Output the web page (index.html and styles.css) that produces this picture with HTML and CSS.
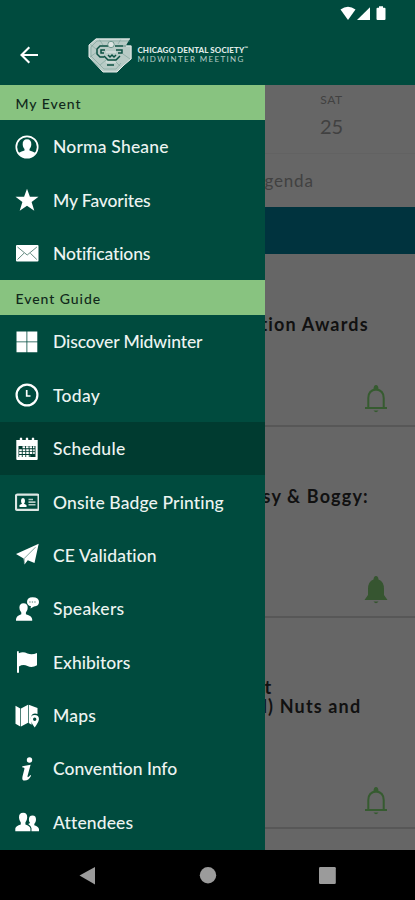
FILE: index.html
```html
<!DOCTYPE html>
<html lang="en">
<head>
<meta charset="utf-8">
<title>Midwinter Meeting</title>
<link rel="stylesheet" href="styles.css">
</head>
<body>
<div class="phone">
  <header class="top">
    <div class="status">
      <svg width="52" height="18" viewBox="0 0 52 18"><g fill="#fff"><path d="M2.500 4.500Q10-1 17.500 4.500L10 15Z"/><path d="M32 2.200V15H19Z"/><path d="M41 1.300h4v1.500h1.500q1 0 1 1V14q0 1-1 1h-7q-1 0-1-1V3.800q0-1 1-1H41Z"/></g></svg>
    </div>
    <div class="bar">
      <svg class="back" width="20" height="20" viewBox="0 0 20 20" fill="none" stroke="#fff" stroke-width="2.100"><path d="M19 10H3M10.300 2.200 2.500 10l7.800 7.800"/></svg>
      <svg class="logo" width="44" height="35" viewBox="0 0 44 35">
        <path fill="#b8cbc6" d="M8 .5H42L38 7.500H43.500V21L36 27 29 34H15L9 27 1 19V7Z"/>
        <g fill="none" stroke="#6f968d" stroke-width=".5"><path d="M42 3H9L3 9v9l13 13h12l5-6"/><path d="M2 6l6 5M2 19l7-5M12 27l6-5M26 22l6 6M35 16l7 5M11 1l4 6M33 1l-3 5"/></g>
        <g fill="none" stroke="#0b5042" stroke-width="1.500"><path d="M20 8H12L9 11v5l3 3h4M17 12h-4v3h3M27 8h11M28 12h6v3h-4M16 18l4 4h8l4-4M19 27h7M20 17l2 2 2-2 2 2 2-2"/></g>
        <circle cx="23" cy="6.500" r="3.200" fill="#dce5e2" stroke="#55867a" stroke-width=".8"/>
        <g fill="none" stroke="#e4ebe9" stroke-width="1"><path d="M42 1H8L1 7v12l14 15h14l7-7 7-6V8H35M18 14h10M18 24h10"/></g>
      </svg>
      <div class="brand"><div class="b1">CHICAGO DENTAL SOCIETY<span class="tm">™</span></div><div class="b2">MIDWINTER MEETING</div></div>
    </div>
  </header>
  <main class="main">
    <nav class="drawer">
      <h2>My Event</h2>
      <a class="item"><svg viewBox="0 0 24 24"><circle cx="12" cy="12" r="10.700" fill="none" stroke="#fff" stroke-width="1.700"/><path fill="#fff" d="M12 4.200c3 0 4.500 2 4.300 5.200-.1 2.400-1 3.600-1.800 4.500v1.600c1.800.5 4 1.300 6 2.600-2 3.300-5 4.600-8.500 4.600s-6.500-1.300-8.500-4.600c2-1.300 4.200-2.100 6-2.600v-1.600c-.8-.9-1.700-2.100-1.800-4.500C7.500 6.200 9 4.200 12 4.200Z"/></svg><span class="t">Norma Sheane</span></a>
      <a class="item"><svg viewBox="0 0 24 24"><path fill="#fff" d="m12 .8 2.900 7.900h8.600l-6.900 5.200 2.700 8.900L12 17.700l-7.300 5.100 2.700-8.900L.5 8.700h8.600Z"/></svg><span class="t snug">My Favorites</span></a>
      <a class="item"><svg viewBox="0 0 24 24"><rect x="1" y="4" width="22.500" height="16.500" rx="1" fill="#fff"/><path d="m2.500 6 9.700 8 9.700-8M2.500 18.500l6.500-6.300m6.300 0 6.500 6.300" fill="none" stroke="#517d72" stroke-width=".9"/></svg><span class="t snug">Notifications</span></a>
      <h2>Event Guide</h2>
      <a class="item"><svg viewBox="0 0 24 24"><path fill="#fff" d="M1.500 1.500h10v10h-10Zm10.800 0h10v10h-10ZM1.500 12.300h10v10h-10Zm10.800 0h10v10h-10Z"/></svg><span class="t snug">Discover Midwinter</span></a>
      <a class="item"><svg viewBox="0 0 24 24" fill="none" stroke="#fff"><circle cx="12" cy="12" r="10.400" stroke-width="2.200"/><path d="M11.700 7v6h3.800" stroke-width="1.700"/></svg><span class="t wide">Today</span></a>
      <a class="item on"><svg viewBox="0 0 24 24"><path fill="#fff" d="M1.300 3h3.500V1.300q1.200-1.500 2.400 0V3h3.600V1.300q1.200-1.500 2.400 0V3h3.600V1.300q1.200-1.500 2.400 0V3h3.500v19q0 1-1 1H2.300q-1 0-1-1Z"/><path fill="#003b30" d="M3.500 9h17v11h-17Z"/><path d="M7.500 10.300h12M4.200 13.200h15.500M4.200 16.100h15.500M4.200 18.900h11" stroke="#fff" stroke-width="2" stroke-dasharray="2.600 .9"/></svg><span class="t wide">Schedule</span></a>
      <a class="item"><svg viewBox="0 0 24 24"><rect x="1" y="4.600" width="22.600" height="15.200" rx="1.300" fill="none" stroke="#dce7e4" stroke-width="2.200"/><path fill="#fff" d="M4.500 17v-2l2.500-1.300q-1-1-1-3Q6 8 8 8t2 2.700q0 2-1 3l2.500 1.300v2Z"/><path d="M13.500 9.500H18m-4.500 2.600h7m-7 2.600h7" stroke="#b5cbc5" stroke-width="1.600"/></svg><span class="t mid">Onsite Badge Printing</span></a>
      <a class="item"><svg viewBox="0 0 24 24"><path fill="#fff" d="M23.700.8 19.500 20l-6.700-2.700-3.300 4.200-.9-6L1 11Z"/><path d="M20.500 4.200 9.200 15.500v5" fill="none" stroke="#487b70" stroke-width=".7"/></svg><span class="t mid">CE Validation</span></a>
      <a class="item"><svg viewBox="0 0 24 24"><g fill="#fff"><path d="M8.500 6.300q4.300 0 4.200 4.500 0 3-1.800 4.700v1.700q6 1.500 6.300 5v1.500H1v-1.500q.3-3.500 5.300-5v-1.700q-1.900-1.700-1.900-4.700 0-4.500 4.100-4.500Z"/><path d="M17.500.3q6.500.2 6.500 4.700 0 4-5 4.500l-3.500 2 .5-2.300q-4-.8-4-4.200 0-4.500 5.500-4.700Z"/></g><path d="M14.300 5h7.500" stroke="#487b70" stroke-width="1" stroke-dasharray="1.300 1.200"/></svg><span class="t wide">Speakers</span></a>
      <a class="item"><svg viewBox="0 0 24 24"><path fill="#fff" d="M2 1.300h1.800v2Q8 1 12.500 3.600 17 5.200 22 3v12.200q-5 3-9.500.8-4.500-2.200-8.500.5v6.200H2Z"/></svg><span class="t near">Exhibitors</span></a>
      <a class="item"><svg viewBox="0 0 24 24"><path fill="#fff" d="m.5 1.800 4.800 2.700v18L.5 19.700Zm5.500 2.700 7-3.700v18L6 22.500ZM13.700.8 22.500 4v6q-5-1.700-6.600 3-.5 2 .7 4.500v3.200l-2.900-1.800Z"/><path fill="#fff" fill-rule="evenodd" d="M19.700 11q4.500.2 4.200 4.500-.5 3-4.200 8-3.700-5-4.200-8-.3-4.300 4.200-4.500Zm0 2.600a1.700 1.700 0 1 0 0 3.400 1.700 1.700 0 0 0 0-3.400Z"/></svg><span class="t">Maps</span></a>
      <a class="item"><svg viewBox="0 0 24 24"><g fill="#fff"><circle cx="14.500" cy="3" r="2.700"/><path d="m7.400 9.200 8.200-1.400-3 11q-.4 1.700.7 1.300 1-.4 2-2l.8.600q-2.500 4.900-6.300 4.900-3.300 0-2.300-4.200l1.900-7.500q.4-1.700-2.300-1.700Z"/></g></svg><span class="t near">Convention Info</span></a>
      <a class="item"><svg viewBox="0 0 24 24"><g fill="#fff"><path d="M8.200 2.800q4.200 0 4 5-.2 2.900-1.800 4.700v2q4.500 1.500 5 4v2.800H.3v-2.800q.5-2.500 5.500-4v-2Q4.200 10.700 4 7.800q-.2-5 4.200-5Z"/><path d="M17.500 5.500q3.700 0 3.500 4.400-.2 2.600-1.700 4v1.400q4.400 1.300 4.700 4v2h-7.500v-3q-.4-2.500-3.300-4.200l1.900-1q-1.100-1.400-1.200-3.200-.1-4.400 3.600-4.400Z"/></g></svg><span class="t mid">Attendees</span></a>
    </nav>
    <section class="page">
      <div class="day"><div class="dow">SAT</div><div class="num">25</div></div>
      <div class="tab">genda</div>
      <div class="band"></div>
      <article class="card c1"><h3 class="cut">tion Awards</h3><svg class="bell" viewBox="0 0 24 30"><path d="M4.300 23.500V14q0-8 7.700-8.600 7.700.6 7.700 8.600v9.500M1 24h22" fill="none" stroke="#365b30" stroke-width="2"/><path fill="#365b30" d="M9.500 5q.2-4 2.500-4t2.500 4Zm0 21.500h5q-2.500 3.500-5 0Z"/></svg></article>
      <article class="card c2"><h3 class="cut2">sy &amp; Boggy:</h3><svg class="bell" viewBox="0 0 24 30"><path fill="#365530" d="M9.500 4.500Q9.700 1 12 1t2.500 3.500Q20 6.500 20 14v6l3.500 5H.5L4 20v-6q0-7.500 5.500-9.500Zm0 22h5q-2.500 3.500-5 0Z"/></svg></article>
      <article class="card c3"><h3><span class="line">t</span><span class="line second">l) Nuts and</span></h3><svg class="bell" viewBox="0 0 24 30"><path d="M4.300 23.500V14q0-8 7.700-8.600 7.700.6 7.700 8.600v9.500M1 24h22" fill="none" stroke="#365b30" stroke-width="2"/><path fill="#365b30" d="M9.500 5q.2-4 2.500-4t2.500 4Zm0 21.500h5q-2.500 3.500-5 0Z"/></svg></article>
    </section>
  </main>
  <footer class="nav">
    <svg width="415" height="50" viewBox="0 0 415 50" fill="#9b9b9b"><path d="M95 17v17.500L79.500 25.500Z"/><circle cx="208" cy="25.300" r="8.200"/><rect x="319" y="17" width="16.800" height="17" rx="1.200"/></svg>
  </footer>
</div>
</body>
</html>
```
FILE: styles.css
```css
* { box-sizing: border-box; }
body { margin: 0; font-family: Lato, sans-serif; background: #000; }
.phone { width: 415px; height: 900px; display: flex; flex-direction: column; overflow: hidden; }
.top { height: 85px; background: #004b3e; flex: none; }
.status { height: 25px; padding: 5px 25px 0 0; display: flex; justify-content: flex-end; }
.bar { height: 60px; display: flex; align-items: center; padding-left: 19px; }
.back { flex: none; }
.logo { margin-left: 49px; flex: none; }
.brand { margin-left: 5.5px; color: #dfe9e6; white-space: nowrap; }
.b1 { display: flex; font-size: 8px; font-weight: 900; line-height: 9px; letter-spacing: .1px; }
.tm { font-size: 5px; line-height: 5px; }
.b2 { font-size: 8px; line-height: 9px; letter-spacing: 1.350px; color: #b6cdc6; }
.main { height: 765px; flex: none; display: flex; overflow: hidden; }
.drawer { width: 264.5px; flex: none; background: #004b3e; }
.drawer h2 { margin: 0; height: 35px; padding: 2px 0 0 15.5px; display: flex; align-items: center; background: #88c380; color: #10291b; font-size: 14px; font-weight: 500; letter-spacing: .950px; }
.item { height: 53.400px; display: flex; align-items: center; padding-left: 15px; color: #edf4f1; }
.item svg { width: 24px; height: 24px; flex: none; }
.t { margin-left: 14px; font-size: 17.500px; font-weight: 500; letter-spacing: .2px; white-space: nowrap; }
.snug { letter-spacing: -.120px; }
.near { letter-spacing: 0; }
.mid { letter-spacing: .120px; }
.wide { letter-spacing: .320px; }
.on { background: #003b30; }
.page { flex: 1; min-width: 0; background: #666; color: #111; overflow: hidden; }
.day { height: 68px; width: 134px; padding-top: 7px; text-align: center; color: #414141; }
.dow { font-size: 12px; line-height: 16px; letter-spacing: .6px; }
.num { font-size: 20px; line-height: 24px; margin-top: 6px; }
.tab { height: 54px; border-top: 1px solid #626262; line-height: 54px; font-size: 17px; letter-spacing: .8px; color: #414141; }
.band { height: 46.500px; background: #00333e; }
.card { border-bottom: 2px solid #575757; display: flex; flex-direction: column; justify-content: space-between; padding-bottom: 11px; }
.card h3 { margin: 0; font-size: 18px; line-height: 19px; font-weight: 700; letter-spacing: 1.150px; white-space: nowrap; }
.c1 { height: 173.500px; padding-top: 61px; }
.c2 { height: 191px; padding-top: 60px; }
.c3 { height: 210.500px; padding-top: 60px; }
.card .cut { margin-left: -4px; }
.card .cut2 { margin-left: -2px; }
.line { display: block; }
.second { margin-left: -2px; }
.bell { width: 24px; height: 30px; margin-left: 99px; }
.nav { height: 50px; background: #000; }
.nav svg { display: block; }
```
